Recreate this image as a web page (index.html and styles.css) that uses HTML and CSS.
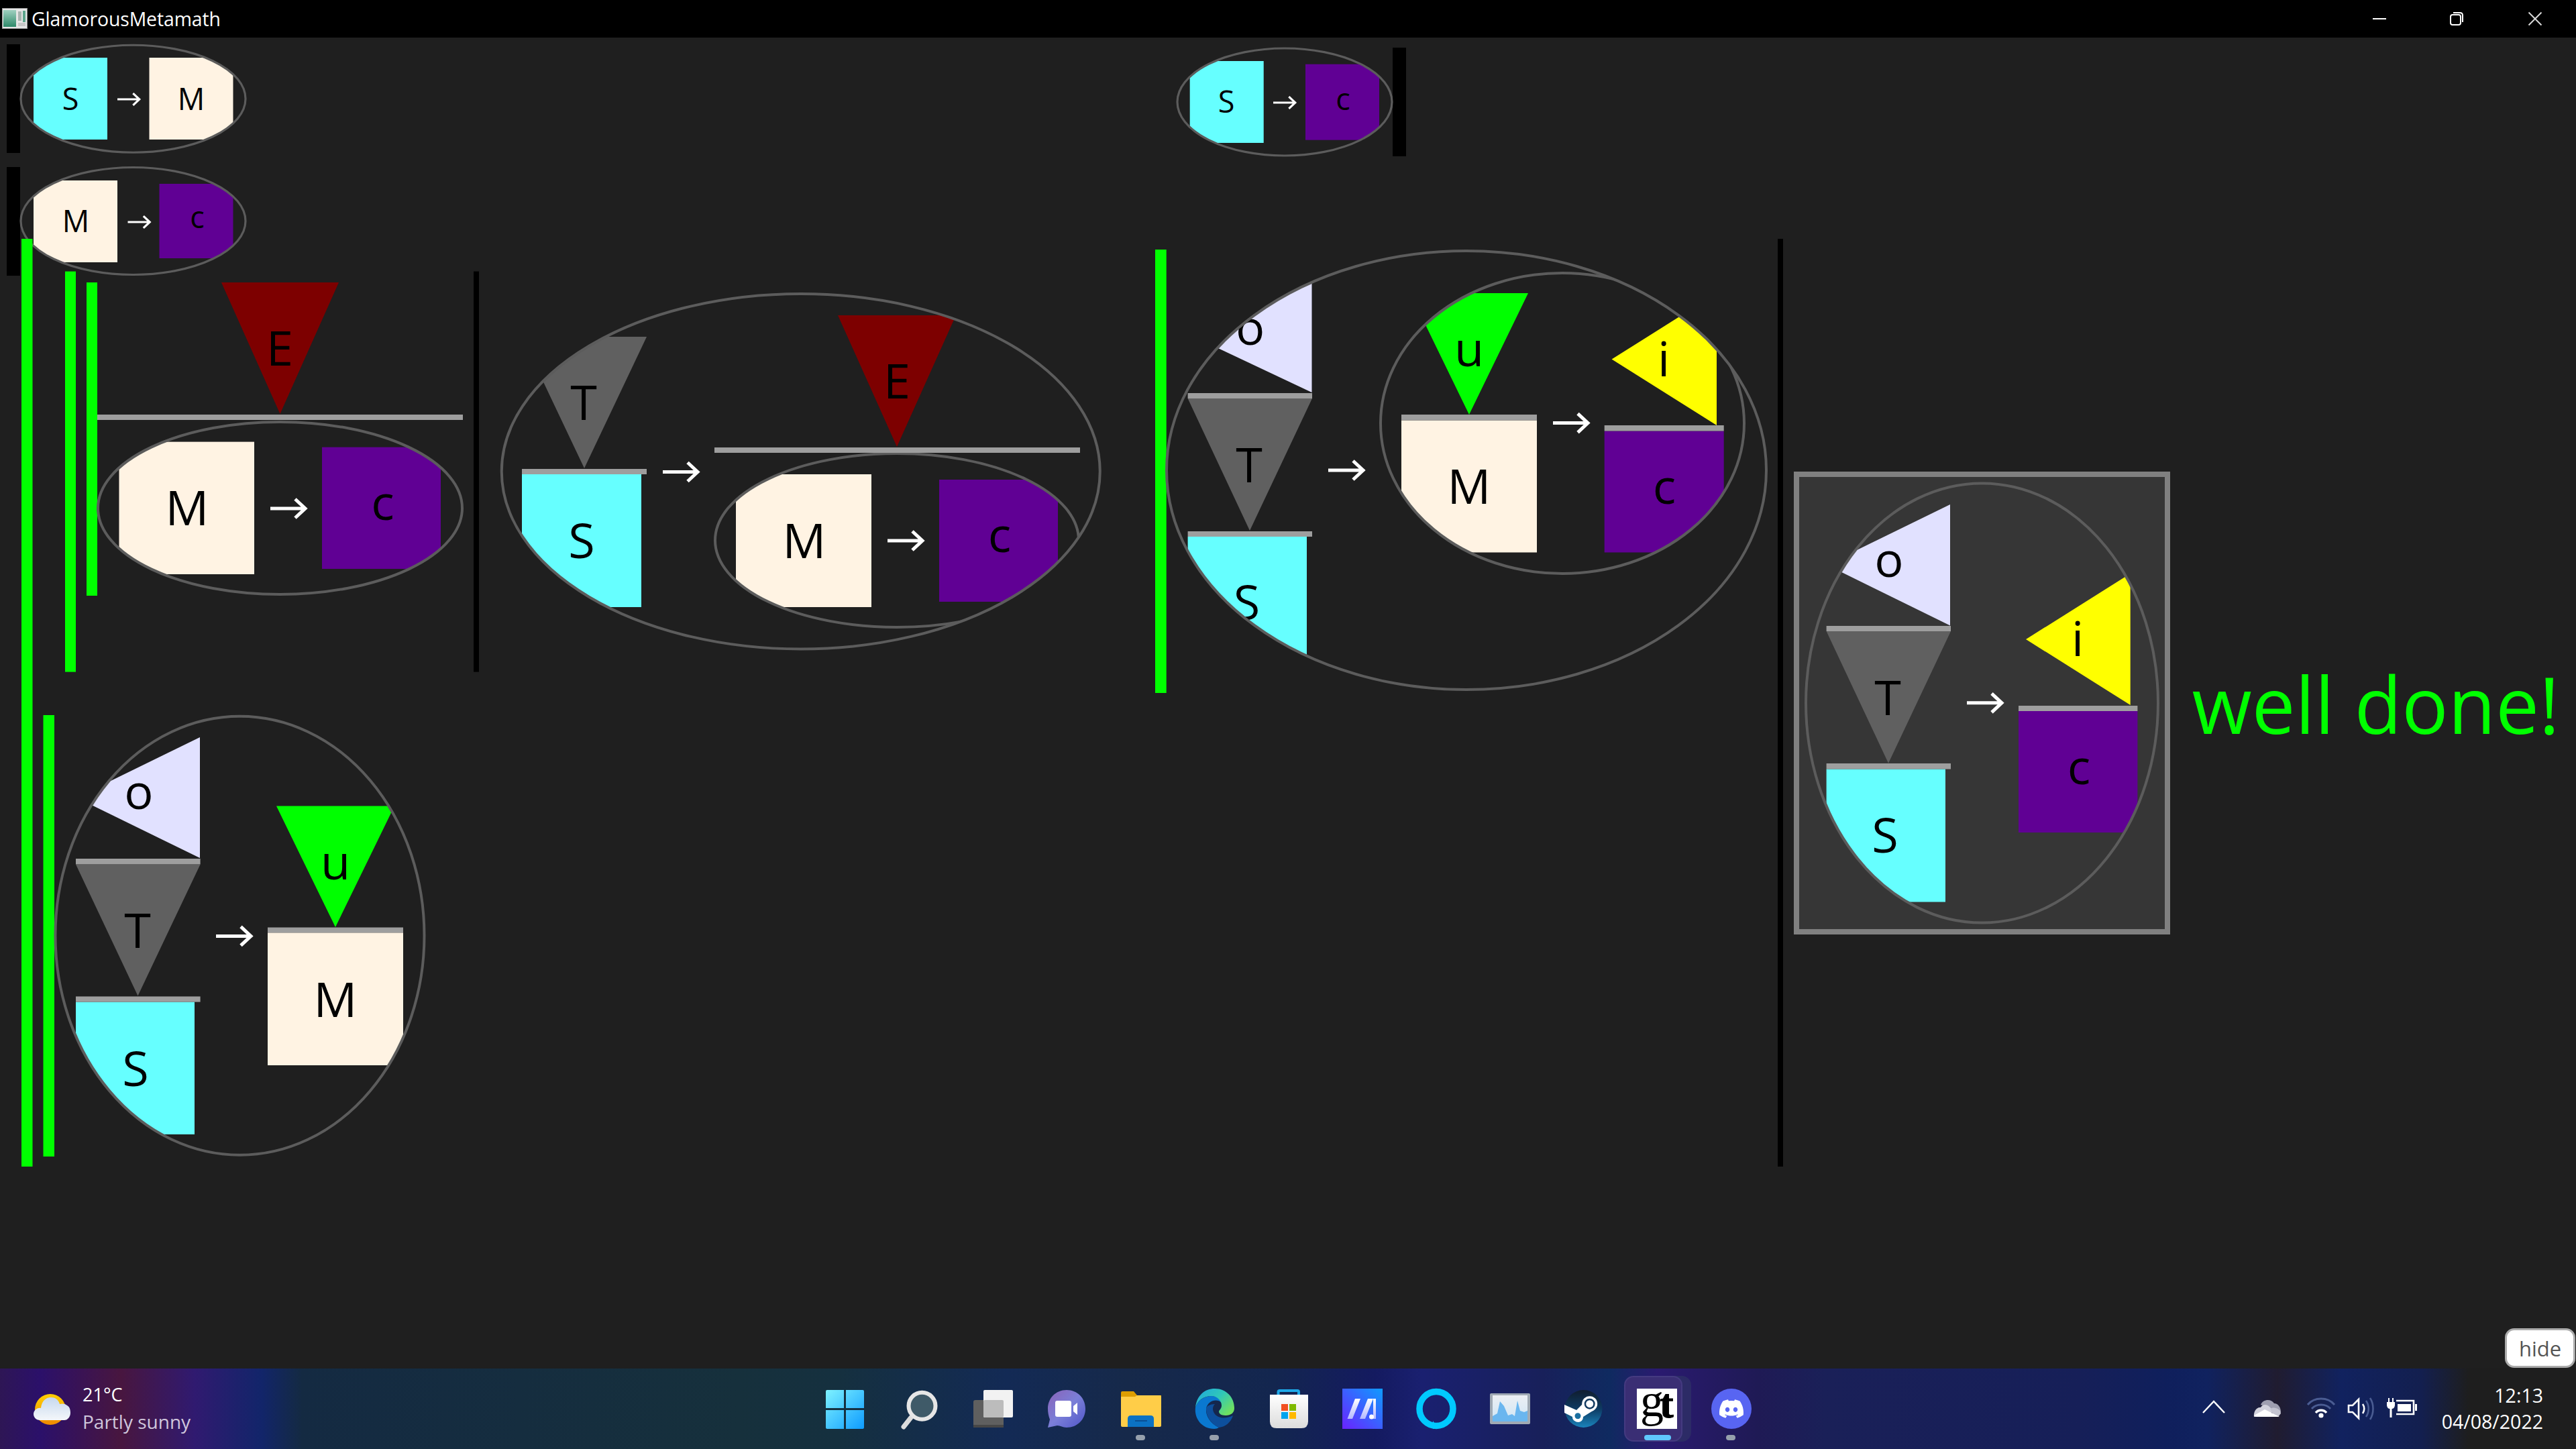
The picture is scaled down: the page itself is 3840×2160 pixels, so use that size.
FILE: index.html
```html
<!DOCTYPE html>
<html lang="en">
<head>
<meta charset="utf-8">
<title>GlamorousMetamath</title>
<link rel="stylesheet" href="styles.css">
</head>
<body>
<header class="titlebar">
  <svg class="app-icon" viewBox="0 0 38 31"><defs><linearGradient id="appg" x1="0" y1="0" x2="0" y2="1"><stop offset="0" stop-color="#9fd0c0"/><stop offset="1" stop-color="#2f8a6a"/></linearGradient></defs><rect x="0.5" y="0.5" width="37" height="30" fill="#e6e6e6" stroke="#9a9a9a"/><rect x="2" y="3" width="19" height="25" fill="url(#appg)"/><rect x="24" y="5" width="5" height="14" fill="#a8b4b0"/><rect x="31" y="4" width="4" height="17" fill="#5da58c"/><rect x="24" y="22" width="11" height="5" fill="#c8c8c8"/></svg>
  <span class="app-title">GlamorousMetamath</span>
  <div class="win-controls">
    <svg class="win-btn" viewBox="0 0 20 20"><path class="wline" d="M0 10H20"/></svg>
    <svg class="win-btn" viewBox="0 0 20 20"><rect class="wline" x="1" y="4" width="15" height="15" rx="3"/><path class="wline" d="M5 1H15Q19 1 19 5V15"/></svg>
    <svg class="win-btn" viewBox="0 0 20 20"><path class="wline wclose" d="M0.5 0.5L19.5 19.5M19.5 0.5L0.5 19.5"/></svg>
  </div>
</header>

<main class="canvas">
  <svg class="scene" viewBox="0 56 3840 1984" width="3840" height="1984">
    <defs>
      <path id="arr" class="arrow" d="M0 0H52M37 -14L52 0L37 14"/>
      <clipPath id="s1"><ellipse cx="198.5" cy="147.25" rx="167.5" ry="80"/></clipPath>
      <clipPath id="s2"><ellipse cx="198.5" cy="329.5" rx="167.5" ry="80"/></clipPath>
      <clipPath id="s3"><ellipse cx="1915" cy="152" rx="160" ry="80"/></clipPath>
      <clipPath id="a1"><ellipse cx="417.5" cy="757.5" rx="271.5" ry="128.5"/></clipPath>
      <clipPath id="b1"><ellipse cx="1193.75" cy="702.75" rx="446" ry="264.75"/></clipPath>
      <clipPath id="b2"><ellipse cx="1337" cy="805.5" rx="271" ry="129.5"/></clipPath>
      <clipPath id="c1"><ellipse cx="2186" cy="701" rx="447" ry="327"/></clipPath>
      <clipPath id="c2"><ellipse cx="2329" cy="631" rx="271" ry="224"/></clipPath>
      <clipPath id="d1"><ellipse cx="2954.5" cy="1048" rx="262.5" ry="327.6"/></clipPath>
      <clipPath id="e1"><ellipse cx="357.5" cy="1394.75" rx="275" ry="327"/></clipPath>
    </defs>

    <!-- small goal 1 -->
    <rect class="black" x="10" y="66" width="20" height="162"/>
    <g clip-path="url(#s1)">
      <rect class="cyan" x="50" y="86" width="110" height="122"/>
      <rect class="cream" x="222.5" y="86" width="125" height="122"/>
    </g>
    <ellipse class="oval thin" cx="198.5" cy="147.25" rx="167.5" ry="80"/>
    <text class="glyph sm" x="105" y="164">S</text>
    <text class="glyph sm" x="285" y="164">M</text>
    <use href="#arr" transform="translate(175 148) scale(.63)"/>

    <!-- small goal 2 -->
    <rect class="black" x="10" y="249" width="20" height="162"/>
    <g clip-path="url(#s2)">
      <rect class="cream" x="50" y="269" width="125" height="122"/>
      <rect class="purple" x="237.5" y="274" width="110" height="111"/>
    </g>
    <ellipse class="oval thin" cx="198.5" cy="329.5" rx="167.5" ry="80"/>
    <text class="glyph sm" x="113" y="346">M</text>
    <text class="glyph sm" x="294" y="340">c</text>
    <use href="#arr" transform="translate(190.5 331) scale(.63)"/>

    <!-- small goal 3 -->
    <rect class="black" x="2076" y="71" width="20" height="162"/>
    <g clip-path="url(#s3)">
      <rect class="cyan" x="1773.7" y="91" width="110" height="122"/>
      <rect class="purple" x="1946" y="95.7" width="110" height="113"/>
    </g>
    <ellipse class="oval thin" cx="1915" cy="152" rx="160" ry="80"/>
    <text class="glyph sm" x="1828" y="168">S</text>
    <text class="glyph sm" x="2002" y="164">c</text>
    <use href="#arr" transform="translate(1898 153) scale(.63)"/>

    <!-- proof bars -->
    <rect class="green" x="32" y="356" width="16.5" height="1383"/>
    <rect class="green" x="97" y="404.6" width="16" height="597"/>
    <rect class="green" x="129" y="421" width="16" height="467"/>
    <rect class="green" x="64.5" y="1066" width="16.5" height="658"/>
    <rect class="green" x="1722" y="372" width="16.7" height="661"/>
    <rect class="black" x="706" y="404.6" width="8" height="597"/>
    <rect class="black" x="2650" y="356" width="8" height="1383"/>

    <!-- scene A -->
    <polygon class="maroon" points="330,421 505,421 417.5,617"/>
    <rect class="rule" x="145" y="618" width="545" height="8"/>
    <text class="glyph lg" x="417" y="545">E</text>
    <g clip-path="url(#a1)">
      <rect class="cream" x="177.5" y="658.6" width="201.5" height="197.4"/>
      <rect class="purple" x="480" y="666.6" width="177" height="181.4"/>
    </g>
    <ellipse class="oval" cx="417.5" cy="757.5" rx="271.5" ry="128.5"/>
    <text class="glyph lg" x="279" y="783">M</text>
    <text class="glyph lg" x="570.5" y="775">c</text>
    <use href="#arr" transform="translate(403 758)"/>

    <!-- scene B -->
    <g clip-path="url(#b1)">
      <polygon class="slate" points="778,502 964,502 871,698"/>
      <rect class="cyan" x="778" y="707" width="178" height="198"/>
      <polygon class="maroon" points="1249,470 1425,470 1337,666"/>
      <g clip-path="url(#b2)">
        <rect class="cream" x="1097" y="707" width="202" height="198"/>
        <rect class="purple" x="1400" y="715" width="177" height="182"/>
      </g>
      <ellipse class="oval" cx="1337" cy="805.5" rx="271" ry="129.5"/>
    </g>
    <rect class="rule" x="778" y="699" width="186" height="8"/>
    <rect class="rule" x="1065" y="667" width="545" height="8"/>
    <ellipse class="oval" cx="1193.75" cy="702.75" rx="446" ry="264.75"/>
    <text class="glyph lg" x="870" y="626">T</text>
    <text class="glyph lg" x="1337" y="594">E</text>
    <text class="glyph lg" x="867" y="832">S</text>
    <text class="glyph lg" x="1199" y="832">M</text>
    <text class="glyph lg" x="1490" y="823">c</text>
    <use href="#arr" transform="translate(988 703.5)"/>
    <use href="#arr" transform="translate(1323 806)"/>

    <!-- scene C -->
    <g clip-path="url(#c1)">
      <polygon class="lilac" points="1955.5,399 1955.5,585 1758.5,492"/>
      <polygon class="slate" points="1770.6,594 1956,594 1863,791"/>
      <rect class="cyan" x="1770.6" y="800" width="177.4" height="200"/>
      <text class="glyph lg" x="1863.7" y="513.5">o</text>
      <text class="glyph lg" x="1858.6" y="924">S</text>
      <g clip-path="url(#c2)">
        <polygon class="lime" points="2102,437 2278,437 2190,618"/>
        <rect class="cream" x="2089" y="626.5" width="202" height="197"/>
        <polygon class="yellow" points="2559,437 2559,634 2402.6,535.6"/>
        <rect class="purple" x="2391.7" y="642.5" width="178" height="181"/>
      </g>
      <ellipse class="oval" cx="2329" cy="631" rx="271" ry="224"/>
    </g>
    <rect class="rule" x="1770.6" y="586" width="185.4" height="8"/>
    <rect class="rule" x="1770.6" y="792" width="185.4" height="8"/>
    <rect class="rule" x="2089" y="618" width="202" height="8.5"/>
    <rect class="rule" x="2391.7" y="634" width="178" height="8.5"/>
    <ellipse class="oval" cx="2186" cy="701" rx="447" ry="327"/>
    <text class="glyph lg" x="1862" y="719">T</text>
    <text class="glyph lg" x="2190" y="546">u</text>
    <text class="glyph lg" x="2190" y="751">M</text>
    <text class="glyph lg" x="2480" y="561">i</text>
    <text class="glyph lg" x="2481" y="751">c</text>
    <use href="#arr" transform="translate(1980 701)"/>
    <use href="#arr" transform="translate(2315 630.6)"/>

    <!-- scene D: selected -->
    <rect class="panel" x="2678" y="707" width="553" height="682"/>
    <g clip-path="url(#d1)">
      <polygon class="lilac" points="2907,752 2907,932.5 2723,842"/>
      <polygon class="slate" points="2722.6,941 2908,941 2815,1137.7"/>
      <rect class="cyan" x="2722.6" y="1146.5" width="177.4" height="198"/>
      <polygon class="yellow" points="3175.7,855 3175.7,1051 3020,953"/>
      <rect class="purple" x="3009" y="1060" width="177.4" height="181"/>
    </g>
    <rect class="rule" x="2722.6" y="933" width="185.4" height="8"/>
    <rect class="rule" x="2722.6" y="1138" width="185.4" height="8.5"/>
    <rect class="rule" x="3009" y="1052" width="177.4" height="8"/>
    <ellipse class="oval" cx="2954.5" cy="1048" rx="262.5" ry="327.6"/>
    <text class="glyph lg" x="2816" y="860">o</text>
    <text class="glyph lg" x="2814" y="1066">T</text>
    <text class="glyph lg" x="2810" y="1271">S</text>
    <text class="glyph lg" x="3097" y="978">i</text>
    <text class="glyph lg" x="3099" y="1169">c</text>
    <use href="#arr" transform="translate(2932 1047.8)"/>

    <text class="done" x="3267.5" y="1094" textLength="548" lengthAdjust="spacingAndGlyphs">well done!</text>

    <!-- scene E -->
    <g clip-path="url(#e1)">
      <polygon class="lilac" points="298,1099 298,1279 114,1189"/>
      <polygon class="slate" points="113,1288.4 298.6,1288.4 205.5,1484.4"/>
      <rect class="cyan" x="113" y="1493.6" width="177" height="197.4"/>
      <polygon class="lime" points="412,1201.6 588,1201.6 500,1382"/>
      <rect class="cream" x="399" y="1390.3" width="202" height="197.7"/>
    </g>
    <rect class="rule" x="113" y="1280" width="185.6" height="8.4"/>
    <rect class="rule" x="113" y="1485.4" width="185.6" height="8.2"/>
    <rect class="rule" x="399" y="1382.5" width="202" height="7.8"/>
    <ellipse class="oval" cx="357.5" cy="1394.75" rx="275" ry="327"/>
    <text class="glyph lg" x="207" y="1206">o</text>
    <text class="glyph lg" x="205" y="1413">T</text>
    <text class="glyph lg" x="202" y="1618.5">S</text>
    <text class="glyph lg" x="500" y="1311">u</text>
    <text class="glyph lg" x="500" y="1516">M</text>
    <use href="#arr" transform="translate(322 1395.4)"/>
  </svg>
  <button class="hide-btn">hide</button>
</main>

<footer class="taskbar">
  <div class="weather">
    <svg class="weather-icon" viewBox="0 0 56 40">
      <defs>
        <linearGradient id="sun" x1="0" y1="0" x2="0" y2="1"><stop offset="0" stop-color="#ffcf00"/><stop offset="1" stop-color="#ef8a00"/></linearGradient>
        <linearGradient id="cloud" x1="0" y1="0" x2="0" y2="1"><stop offset="0" stop-color="#c6d8ee"/><stop offset="1" stop-color="#f4f7fa"/></linearGradient>
      </defs>
      <circle cx="25" cy="23" r="23" fill="url(#sun)"/>
      <path fill="url(#cloud)" d="M10 46C3 46 0 41 0 37C0 32 5 27 11 28C12 18 18 12 26 12C32 12 37 15 39 22C42 21 47 21 50 24C54 26 55 31 55 35C55 41 51 46 46 46Z" transform="translate(0 -7)"/>
    </svg>
    <div class="weather-text">
      <div class="temp">21°C</div>
      <div class="cond">Partly sunny</div>
    </div>
  </div>

  <nav class="dock">
    <div class="slot"><svg class="icon" viewBox="0 0 60 60"><defs><linearGradient id="win" gradientUnits="userSpaceOnUse" x1="1" y1="2" x2="59" y2="60"><stop offset="0" stop-color="#7ef2ff"/><stop offset="1" stop-color="#0d9bff"/></linearGradient></defs><path fill="url(#win)" d="M1 4Q1 2 3 2H28V29H1ZM31 2H56Q58 2 58 4V29H31ZM1 32H28V60H3Q1 60 1 58ZM31 32H58V58Q58 60 56 60H31Z"/></svg></div>
    <div class="slot"><svg class="icon" viewBox="0 0 60 60"><path d="M18 43L7 57" stroke="#dcdcdc" stroke-width="7" stroke-linecap="round" fill="none"/><circle cx="34.5" cy="25.7" r="20" fill="#3f5a68" stroke="#e6e6e6" stroke-width="6"/></svg></div>
    <div class="slot"><svg class="icon" viewBox="0 0 60 60"><rect x="1" y="17" width="45" height="41" rx="3" fill="#5f5f5f"/><rect x="1" y="54" width="45" height="4" fill="#474747"/><rect x="16" y="2" width="44" height="41" rx="2" fill="#f2f2f2"/><rect x="16" y="17" width="30" height="26" rx="2" fill="#bcbcbc"/></svg></div>
    <div class="slot"><svg class="icon" viewBox="0 0 60 60"><defs><linearGradient id="chat" x1="0" y1="0" x2="1" y2="1"><stop offset="0" stop-color="#8a63b8"/><stop offset=".5" stop-color="#7b7fd8"/><stop offset="1" stop-color="#4f55c8"/></linearGradient></defs><path fill="url(#chat)" d="M30 2C46 2 58 14 58 30C58 46 46 58 30 58C24 58 21 55 16 55L2 58L5 46C3 41 2 35 2 30C2 14 14 2 30 2Z"/><rect x="13" y="18" width="24" height="24" rx="3" fill="#fff"/><path fill="#fff" d="M40 26L46 21V39L40 34Z"/></svg></div>
    <div class="slot"><svg class="icon" viewBox="0 0 60 60"><path fill="#dd9d00" d="M1 6Q1 4 3 4H20L25 10H61V20H1Z"/><path fill="#ffcd48" d="M1 12H22L25 10H59Q61 10 61 12V55Q61 57 59 57H3Q1 57 1 55Z"/><path fill="#0b72c4" d="M11 45Q11 40 16 40H45Q50 40 50 45V57H11Z"/><rect x="22" y="47" width="18" height="2" fill="#0a4f94"/></svg><span class="dot"></span></div>
    <div class="slot"><svg class="icon" viewBox="0 0 60 60"><defs><linearGradient id="edge" x1="0" y1="0" x2="1" y2=".7"><stop offset="0" stop-color="#1ea6e0"/><stop offset=".55" stop-color="#30c8b8"/><stop offset="1" stop-color="#6fe060"/></linearGradient></defs><path fill="#0a78d0" d="M2 28C0 45 12 60 30 60C33 60 35 59 37 58C24 52 17 40 18 30C20 18 34 14 41 21C39 15 33 11 26 11C17 11 6 16 2 28Z"/><path fill="#0d4f9c" d="M18 30C18 40 24 52 37 58C47 57 55 50 58 40C50 44 38 46 31 38C27 33 27 27 31 23C24 23 18 26 18 30Z"/><path fill="url(#edge)" d="M2 28C4 10 16 0 31 0C48 0 60 13 60 29C60 36 55 40 47 40C40 40 37 37 37 34C38 31 41 30 41 25C41 17 33 11 26 11C14 11 5 18 2 28Z"/></svg><span class="dot"></span></div>
    <div class="slot"><svg class="icon" viewBox="0 0 60 60"><defs><linearGradient id="store" x1="0" y1="0" x2="0" y2="1"><stop offset="0" stop-color="#fff"/><stop offset="1" stop-color="#dcdcdc"/></linearGradient></defs><path d="M15.5 12V5Q15.5 3 18 3H44Q46 3 46 5V12" fill="none" stroke="#1ea8e8" stroke-width="4"/><path fill="url(#store)" d="M3 9H60V49Q60 59 50 59H13Q3 59 3 49Z"/><rect x="20" y="23" width="10" height="10" fill="#f25022"/><rect x="32" y="23" width="10" height="10" fill="#7fba00"/><rect x="20" y="35" width="10" height="10" fill="#00a4ef"/><rect x="32" y="35" width="10" height="10" fill="#ffb900"/></svg></div>
    <div class="slot"><svg class="icon" viewBox="0 0 60 60"><defs><linearGradient id="mp" x1="1" y1="0" x2="0" y2="1"><stop offset="0" stop-color="#0e9cff"/><stop offset="1" stop-color="#6a22ff"/></linearGradient><linearGradient id="mps" x1="0" y1="0" x2="0" y2="1"><stop offset="0" stop-color="#fff"/><stop offset="1" stop-color="#b4b8ff"/></linearGradient></defs><rect x="1" y="0" width="60" height="60" fill="url(#mp)"/><path fill="url(#mps)" d="M8.5 45L20 15H28L16 45ZM27 45L39 15H47L35 45ZM47 15H51V45H47Z"/><circle cx="44.5" cy="42" r="3.5" fill="#fff"/></svg></div>
    <div class="slot"><svg class="icon" viewBox="0 0 60 60"><ellipse cx="31" cy="30" rx="25" ry="25.5" fill="none" stroke="#00caff" stroke-width="9.500"/><path fill="#00caff" d="M26 48L26 60L34 60Z"/></svg></div>
    <div class="slot"><svg class="icon" viewBox="0 0 60 60"><defs><linearGradient id="pm" x1="0" y1="0" x2="0" y2="1"><stop offset="0" stop-color="#eceff3"/><stop offset="1" stop-color="#cfe6f6"/></linearGradient></defs><rect x="1" y="7" width="60" height="46" rx="2" fill="#a0aab4"/><rect x="5" y="10" width="52" height="39" fill="url(#pm)"/><path fill="#6ab6ef" d="M5 41L12 37L16 19L22 26L28 40L34 38L38 41L42 18L46 33L52 35L57 33V49H5Z"/></svg></div>
    <div class="slot"><svg class="icon" viewBox="0 0 60 60"><defs><linearGradient id="steam" x1="0" y1="0" x2="0" y2="1"><stop offset="0" stop-color="#111d2e"/><stop offset=".5" stop-color="#0d3a62"/><stop offset="1" stop-color="#1a84bc"/></linearGradient></defs><circle cx="30.5" cy="30" r="28" fill="url(#steam)"/><path fill="#fff" d="M2 24L20 32L32 20L46 32L30 42C30 50 22 52 17 48C14 46 14 43 14 42L2 36Z"/><circle cx="39.7" cy="22.7" r="11.5" fill="#fff"/><circle cx="39.7" cy="22.7" r="8" fill="#133a60"/><circle cx="39.7" cy="22.7" r="5.5" fill="#fff"/><circle cx="22" cy="40.7" r="4.5" fill="#1a6fa0"/></svg></div>
    <div class="slot slot-active">
      <span class="tile tile-back"></span><span class="tile"></span>
      <svg class="icon gt" viewBox="0 0 60 60"><rect width="60" height="60" fill="#fff"/><text class="gt-g" x="5" y="41">g</text><text class="gt-t" x="34" y="43">t</text></svg>
      <span class="dot dot-active"></span>
    </div>
    <div class="slot"><svg class="icon" viewBox="0 0 60 60"><circle cx="31" cy="30" r="30" fill="#5865f2"/><path fill="#fff" transform="translate(13 12) scale(1.5)" d="M20.317 4.37a19.791 19.791 0 0 0-4.885-1.515.074.074 0 0 0-.079.037c-.21.375-.444.864-.608 1.25a18.27 18.27 0 0 0-5.487 0 12.64 12.64 0 0 0-.617-1.25.077.077 0 0 0-.079-.037A19.736 19.736 0 0 0 3.677 4.37a.07.07 0 0 0-.032.027C.533 9.046-.32 13.58.099 18.057a.082.082 0 0 0 .031.057 19.9 19.9 0 0 0 5.993 3.03.078.078 0 0 0 .084-.028c.462-.63.874-1.295 1.226-1.994a.076.076 0 0 0-.041-.106 13.107 13.107 0 0 1-1.872-.892.077.077 0 0 1-.008-.128 10.2 10.2 0 0 0 .372-.292.074.074 0 0 1 .077-.01c3.928 1.793 8.18 1.793 12.062 0a.074.074 0 0 1 .078.01c.12.098.246.198.373.292a.077.077 0 0 1-.006.127 12.299 12.299 0 0 1-1.873.892.077.077 0 0 0-.041.107c.36.698.772 1.362 1.225 1.993a.076.076 0 0 0 .084.028 19.839 19.839 0 0 0 6.002-3.03.077.077 0 0 0 .032-.054c.5-5.177-.838-9.674-3.549-13.66a.061.061 0 0 0-.031-.03zM8.02 15.33c-1.183 0-2.157-1.085-2.157-2.419 0-1.333.956-2.419 2.157-2.419 1.21 0 2.176 1.096 2.157 2.42 0 1.333-.956 2.418-2.157 2.418zm7.975 0c-1.183 0-2.157-1.085-2.157-2.419 0-1.333.955-2.419 2.157-2.419 1.21 0 2.176 1.096 2.157 2.42 0 1.333-.946 2.418-2.157 2.418z"/></svg><span class="dot"></span></div>
  </nav>

  <div class="tray">
    <svg class="tray-icon wide" viewBox="0 0 80 40"><path d="M24 26L40 9L56 26" fill="none" stroke="#fff" stroke-width="2.4"/></svg>
    <svg class="tray-icon wide cloud-slot" viewBox="0 0 80 40"><path fill="#9f9fb0" d="M30 14C33 6 45 4 50 12C56 12 60 18 60 25L44 20Z"/><path fill="#d2d2dc" d="M20 32C19 24 24 17 30 18C33 13 38 13 42 16L50 24L34 32Z"/><path fill="#c4c4d0" d="M44 20C50 16 60 20 60 27L56 32L50 32Z"/><path fill="#fff" d="M20 30L36 21L58 32H24Q21 32 20 30Z"/></svg>
    <svg class="tray-icon" viewBox="0 0 60 40"><path class="faint" d="M10 14C20 2 40 2 50 14"/><path class="faint" d="M16 20C23 12 37 12 44 20"/><path class="wave" d="M22 26C26 21 34 21 38 26"/><circle cx="30" cy="30" r="3.6" fill="#fff"/></svg>
    <svg class="tray-icon" viewBox="0 0 60 40"><path class="wave thinw" d="M11 15H17L26 6V34L17 25H11Z"/><path class="wave thinw" d="M32 13C35 17 35 23 32 27"/><path class="faint thinw" d="M37 8C42 15 42 25 37 32"/><path class="faint thinw" d="M43 4C49 13 49 27 43 36"/></svg>
    <svg class="tray-icon" viewBox="0 0 60 40"><path fill="#fff" d="M10 4H12V10H16V4H18V10H20V14C20 19 17 20 15.5 20V33H12.500V20C11 20 8 19 8 14V10H10Z"/><path class="wave thinw" d="M22 8H48V28H22" /><rect x="24" y="13" width="20" height="11" fill="#fff"/><rect x="50" y="13" width="3" height="10" fill="#fff"/></svg>
    <div class="clock"><div>12:13</div><div>04/08/2022</div></div>
  </div>
</footer>
</body>
</html>
```

FILE: styles.css
```css
* { box-sizing: border-box; }
html, body { margin: 0; padding: 0; }
body {
  width: 3840px;
  height: 2160px;
  display: flex;
  flex-direction: column;
  background: #1f1f1f;
  font-family: "Open Sans", "Noto Sans", sans-serif;
  overflow: hidden;
}

/* title bar */
.titlebar {
  height: 56px;
  flex: none;
  display: flex;
  align-items: center;
  background: #000;
  padding-left: 3px;
  color: #fff;
}
.app-icon { width: 38px; height: 31px; margin-top: -1px; }
.app-title { margin-left: 6px; font-size: 28.4px; line-height: 56px; letter-spacing: -.1px; }
.win-controls { margin-left: auto; display: flex; }
.win-btn { width: 20px; height: 20px; margin: 0 51px 0 65px; overflow: visible; }
.win-btn + .win-btn { margin-left: 44px; }
.win-btn:last-child { margin-left: 46px; }
.wline { fill: none; stroke: #fff; stroke-width: 2; }
.wclose { stroke: #d8d8d8; }

/* canvas */
.canvas { flex: 1; position: relative; min-height: 0; }
.scene { display: block; }
.black { fill: #000; }
.green { fill: #00ff00; }
.cyan { fill: #66ffff; }
.cream { fill: #fff3e3; }
.purple { fill: #600094; }
.maroon { fill: #7d0000; }
.slate { fill: #606060; }
.lilac { fill: #e1e1ff; }
.lime { fill: #00ff00; }
.yellow { fill: #ffff00; }
.rule { fill: #9e9e9e; }
.panel { fill: #363636; stroke: #808080; stroke-width: 8; }
.oval { fill: none; stroke: #5c5c5c; stroke-width: 4; }
.oval.thin { stroke-width: 3.2; }
.arrow { fill: none; stroke: #fff; stroke-width: 5; }
.glyph { fill: #000; text-anchor: middle; font-family: "Open Sans", "Noto Sans", sans-serif; }
.glyph.lg { font-size: 72px; }
.glyph.sm { font-size: 45px; }
.done { fill: #00ff00; font-size: 118px; font-family: "Open Sans", "Noto Sans", sans-serif; }

.hide-btn {
  position: absolute;
  right: 1px;
  bottom: 1px;
  width: 105px;
  height: 59px;
  background: #fff;
  border: 3px solid #ababab;
  border-radius: 14px;
  color: #555;
  font-family: "Open Sans", "Noto Sans", sans-serif;
  font-size: 31px;
  padding: 0;
}

/* taskbar */
.taskbar {
  height: 120px;
  flex: none;
  display: grid;
  grid-template-columns: 1fr auto 1fr;
  align-items: center;
  background: linear-gradient(90deg,
    #2e1655 0, #2b106a 60px, #48163f 180px, #301a70 290px, #12256a 390px, #142a42 450px,
    #16303c 1100px, #15303f 1250px, #132a55 1500px, #16294a 1680px, #13264f 1900px,
    #141a60 2050px, #1a2070 2120px, #18205a 2300px, #0f2a60 2400px, #2a1a70 2470px,
    #1f1a55 2620px, #1a2058 2720px, #161f58 3100px, #0f1f5c 3230px, #10225f 3290px,
    #201c30 3395px, #11225f 3490px, #131f4f 3610px, #1e1e1e 3680px, #1e1e1e 3840px);
}
.weather { display: flex; align-items: center; padding-left: 50px; color: #fff; }
.weather-icon { width: 56px; height: 40px; margin-top: -4px; overflow: visible; }
.weather-text { margin-left: 17px; }
.temp { font-size: 27px; line-height: 38px; }
.cond { font-size: 28px; line-height: 42px; color: #cfc6dc; }

.dock { display: flex; }
.slot {
  width: 110px;
  height: 120px;
  position: relative;
  display: flex;
  align-items: center;
  justify-content: center;
}
.icon { width: 60px; height: 60px; overflow: visible; position: relative; }
.dot {
  position: absolute;
  left: 48px;
  bottom: 13px;
  width: 14px;
  height: 8px;
  border-radius: 4px;
  background: #96a0ac;
}
.dot-active { left: 36px; width: 40px; height: 8px; background: #5fc8ff; }
.tile {
  position: absolute;
  left: 6px;
  top: 11px;
  width: 87px;
  height: 98px;
  border-radius: 14px;
  background: #3a2e74;
  border: 2px solid #443a80;
}
.tile-back { left: 30px; width: 76px; background: #2c2b66; border-color: #2c2b66; }
.gt-g { font-family: "Liberation Serif", serif; font-size: 70px; fill: #000; }
.gt-t { font-family: "Liberation Serif", serif; font-size: 62px; font-weight: 700; fill: #000; stroke: #000; stroke-width: 1px; }

.tray { display: flex; align-items: center; justify-content: flex-end; padding-right: 49px; color: #fff; }
.tray-icon { width: 60px; height: 40px; overflow: visible; }
.tray-icon.wide { width: 80px; }
.cloud-slot { margin-right: 10px; }
.faint { fill: none; stroke: #4a5c92; stroke-width: 3; }
.wave { fill: none; stroke: #fff; stroke-width: 3.4; }
.thinw { stroke-width: 2.6; }
.clock { margin-left: 28px; width: 153px; white-space: nowrap; text-align: right; font-size: 28.5px; line-height: 39px; }
```
